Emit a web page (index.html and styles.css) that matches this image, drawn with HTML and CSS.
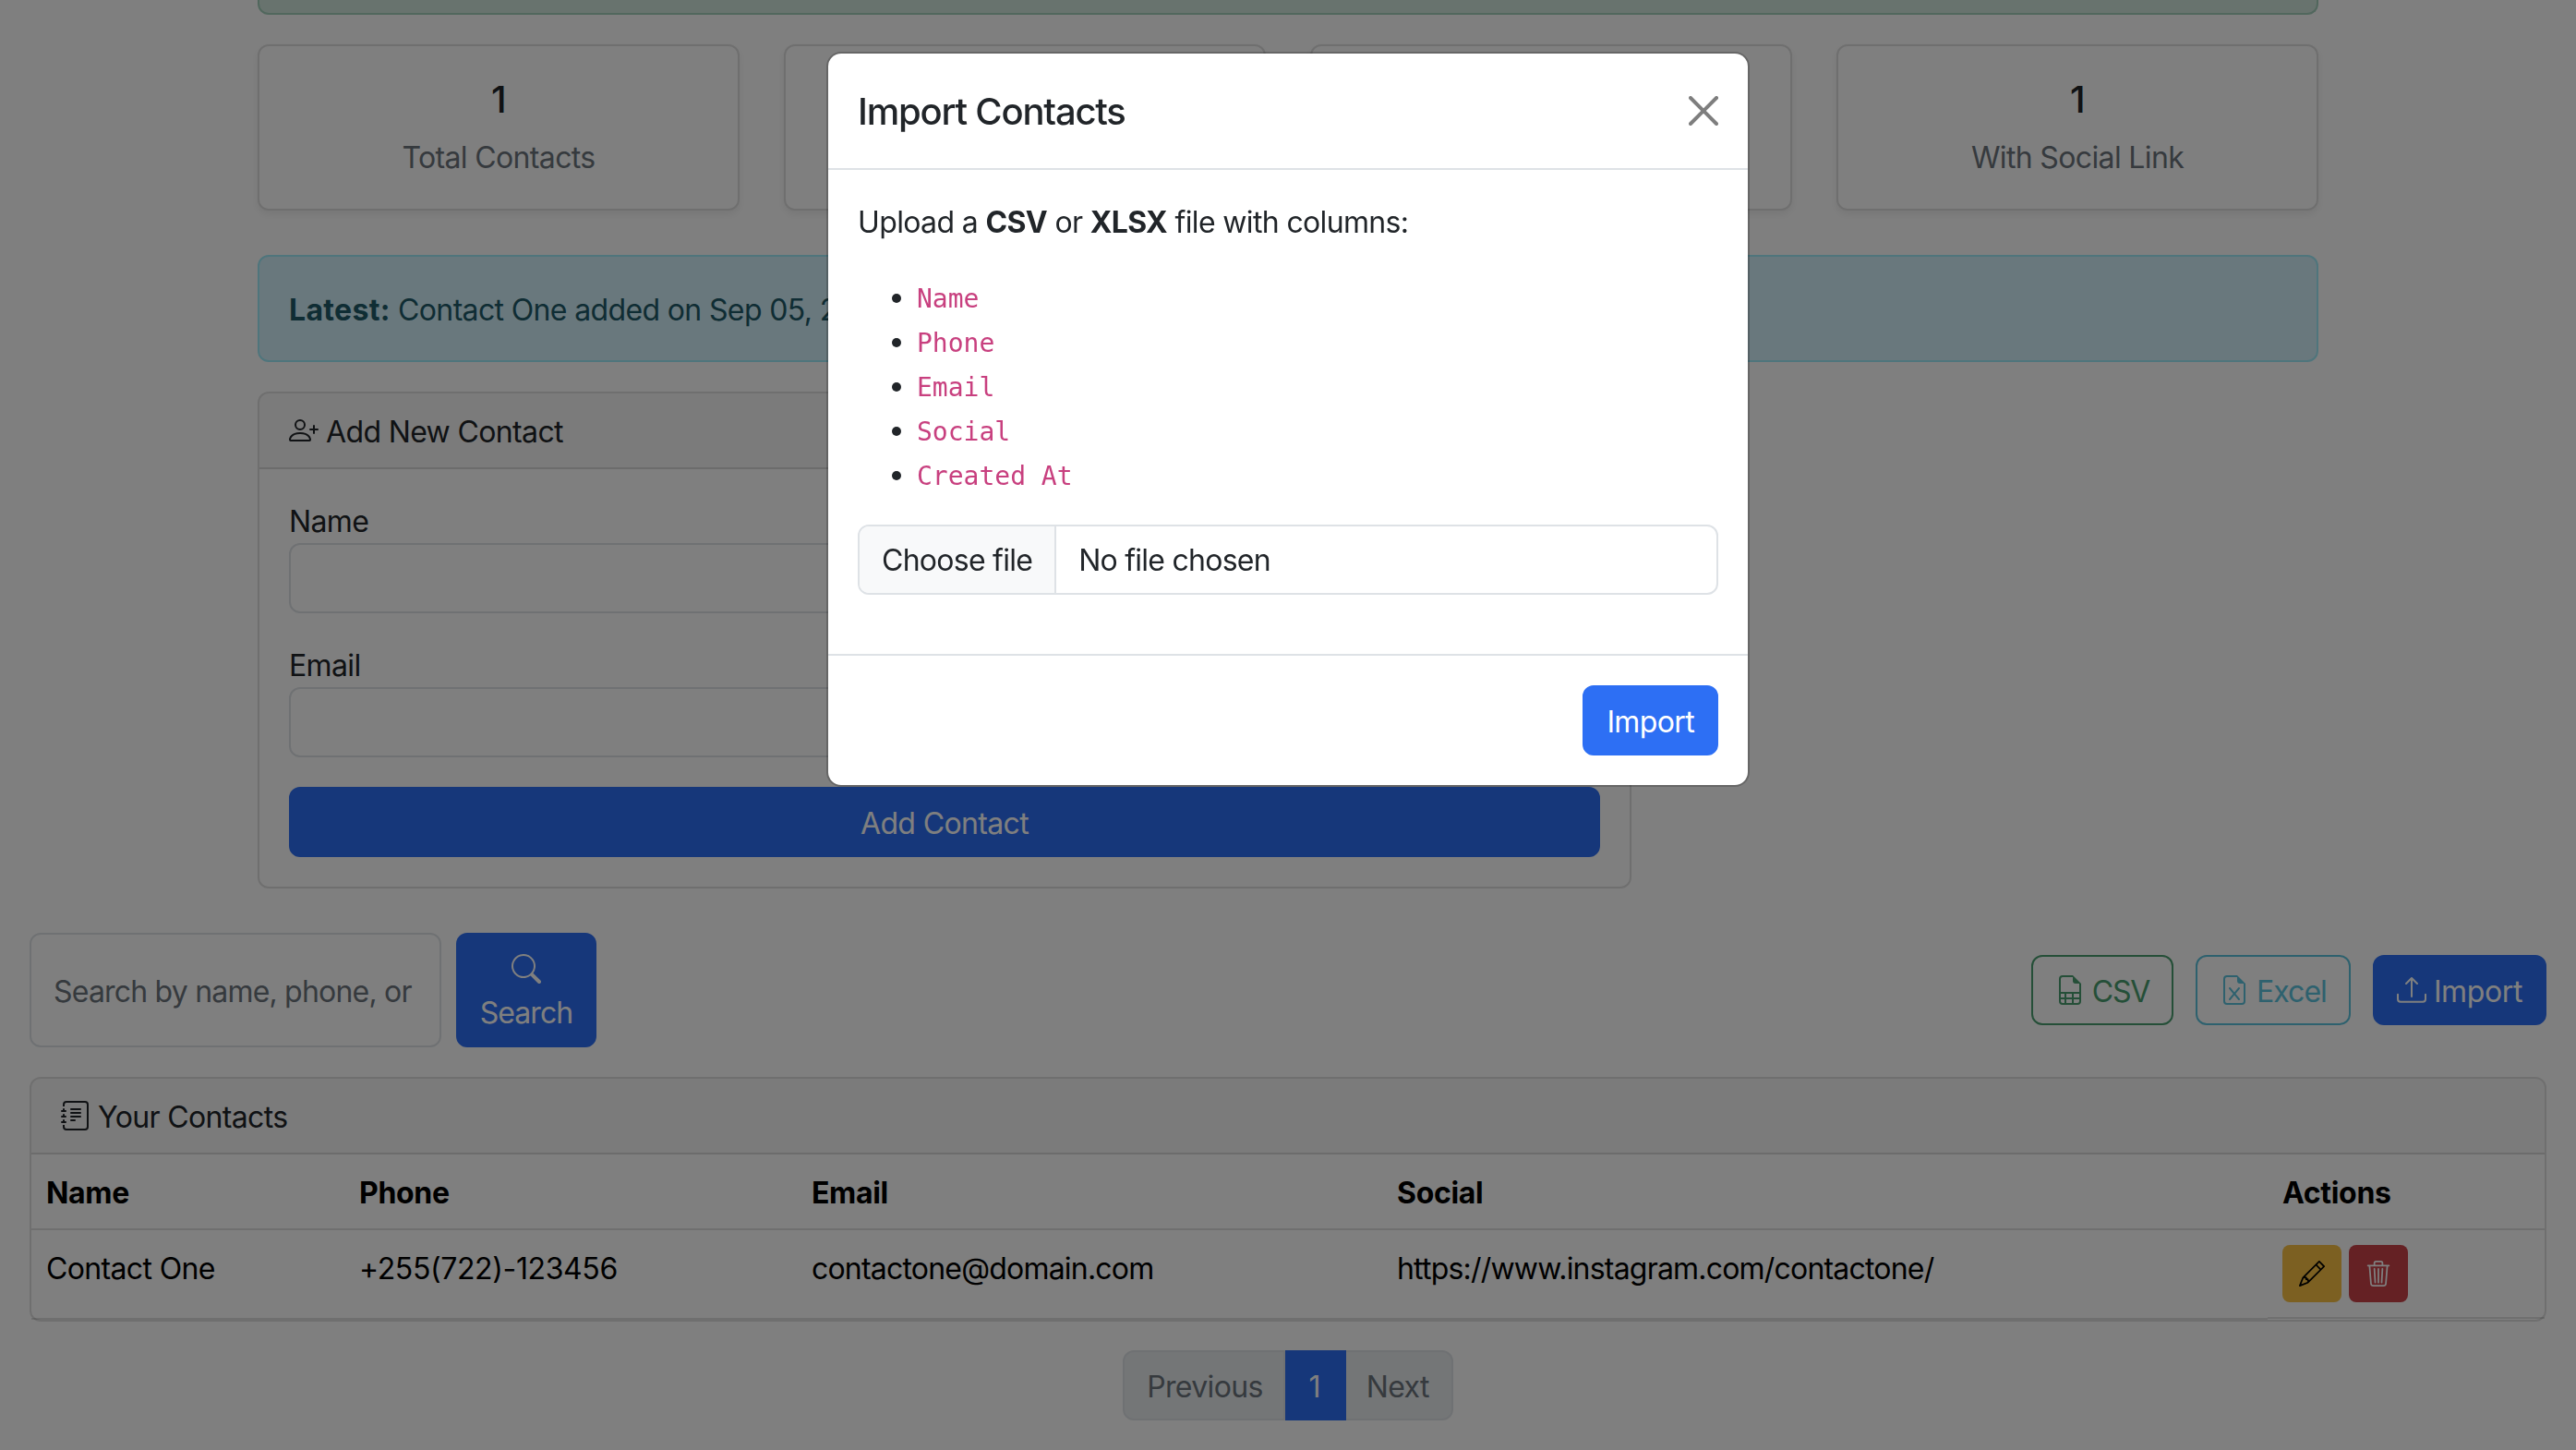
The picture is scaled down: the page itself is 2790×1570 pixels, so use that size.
FILE: index.html
```html
<!DOCTYPE html>
<html lang="en">
<head>
    <meta charset="UTF-8">
    <meta name="viewport" content="width=device-width, initial-scale=1.0">
    <title>Contacts</title>
    <link rel="stylesheet" href="styles.css">
</head>
<body>
    <main class="page">
        <div class="narrow">
            <div class="alert-success"></div>

            <div class="stats">
                <div class="stat-card"><h4>1</h4><p>Total Contacts</p></div>
                <div class="stat-card"><h4>1</h4><p>With Phone</p></div>
                <div class="stat-card"><h4>1</h4><p>With Email</p></div>
                <div class="stat-card"><h4>1</h4><p>With Social Link</p></div>
            </div>

            <div class="alert-info"><strong>Latest:</strong> Contact One added on Sep 05, 2025</div>

            <section class="card add-card">
                <div class="card-header">
                    <svg class="icon" viewBox="0 0 16 16" fill="currentColor"><path d="M6 8a3 3 0 1 0 0-6 3 3 0 0 0 0 6m2-3a2 2 0 1 1-4 0 2 2 0 0 1 4 0m4 8c0 1-1 1-1 1H1s-1 0-1-1 1-4 6-4 6 3 6 4m-1-.004c-.001-.246-.154-.986-.832-1.664C9.516 10.68 8.289 10 6 10s-3.516.68-4.168 1.332c-.678.678-.83 1.418-.832 1.664z"/><path fill-rule="evenodd" d="M13.5 5a.5.5 0 0 1 .5.5V7h1.5a.5.5 0 0 1 0 1H14v1.5a.5.5 0 0 1-1 0V8h-1.5a.5.5 0 0 1 0-1H13V5.5a.5.5 0 0 1 .5-.5"/></svg>
                    <span class="header-text">Add New Contact</span>
                </div>
                <form class="card-body">
                    <label class="field-label">Name</label>
                    <input class="form-control field" type="text">
                    <label class="field-label">Email</label>
                    <input class="form-control field" type="text">
                    <button class="btn btn-primary btn-block" type="button">Add Contact</button>
                </form>
            </section>
        </div>

        <div class="toolbar">
            <form class="search">
                <input class="form-control search-input" type="text" placeholder="Search by name, phone, or email">
                <button class="btn btn-primary search-btn" type="button">
                    <svg class="icon" viewBox="0 0 16 16" fill="currentColor"><path d="M11.742 10.344a6.5 6.5 0 1 0-1.397 1.398h-.001q.044.06.098.115l3.85 3.85a1 1 0 0 0 1.415-1.414l-3.85-3.85a1 1 0 0 0-.115-.1zM12 6.5a5.5 5.5 0 1 1-11 0 5.5 5.5 0 0 1 11 0"/></svg>
                    <span>Search</span>
                </button>
            </form>
            <div class="exports">
                <a class="btn btn-outline-success">
                    <svg class="icon" viewBox="0 0 16 16" fill="currentColor"><path d="M14 14V4.5L9.5 0H4a2 2 0 0 0-2 2v12a2 2 0 0 0 2 2h8a2 2 0 0 0 2-2M9.5 3A1.5 1.5 0 0 0 11 4.5h2V9H3V2a1 1 0 0 1 1-1h5.5zM3 12v-2h2v2zm0 1h2v2H4a1 1 0 0 1-1-1zm3 2v-2h3v2zm4 0v-2h3v1a1 1 0 0 1-1 1zm3-3h-3v-2h3zm-7 0v-2h3v2z"/></svg>
                    CSV
                </a>
                <a class="btn btn-outline-info">
                    <svg class="icon" viewBox="0 0 16 16" fill="currentColor"><path d="M5.884 6.68a.5.5 0 1 0-.768.64L7.349 10l-2.233 2.68a.5.5 0 0 0 .768.64L8 10.781l2.116 2.54a.5.5 0 0 0 .768-.641L8.651 10l2.233-2.68a.5.5 0 0 0-.768-.64L8 9.219l-2.116-2.54z"/><path d="M14 14V4.5L9.5 0H4a2 2 0 0 0-2 2v12a2 2 0 0 0 2 2h8a2 2 0 0 0 2-2M9.5 3A1.5 1.5 0 0 0 11 4.5h2V14a1 1 0 0 1-1 1H4a1 1 0 0 1-1-1V2a1 1 0 0 1 1-1h5.5z"/></svg>
                    Excel
                </a>
                <a class="btn btn-primary btn-import">
                    <svg class="icon" viewBox="0 0 16 16" fill="currentColor"><path d="M.5 9.9a.5.5 0 0 1 .5.5v2.5a1 1 0 0 0 1 1h12a1 1 0 0 0 1-1v-2.5a.5.5 0 0 1 1 0v2.5a2 2 0 0 1-2 2H2a2 2 0 0 1-2-2v-2.5a.5.5 0 0 1 .5-.5"/><path d="M7.646 1.146a.5.5 0 0 1 .708 0l3 3a.5.5 0 0 1-.708.708L8.5 2.707V11.5a.5.5 0 0 1-1 0V2.707L5.354 4.854a.5.5 0 1 1-.708-.708z"/></svg>
                    Import
                </a>
            </div>
        </div>

        <section class="card contacts-card">
            <div class="card-header">
                <svg class="icon" viewBox="0 0 16 16" fill="currentColor"><path d="M5 10.5a.5.5 0 0 1 .5-.5h2a.5.5 0 0 1 0 1h-2a.5.5 0 0 1-.5-.5m0-2a.5.5 0 0 1 .5-.5h5a.5.5 0 0 1 0 1h-5a.5.5 0 0 1-.5-.5m0-2a.5.5 0 0 1 .5-.5h5a.5.5 0 0 1 0 1h-5a.5.5 0 0 1-.5-.5m0-2a.5.5 0 0 1 .5-.5h5a.5.5 0 0 1 0 1h-5a.5.5 0 0 1-.5-.5"/><path d="M3 0h10a2 2 0 0 1 2 2v12a2 2 0 0 1-2 2H3a2 2 0 0 1-2-2v-1h1v1a1 1 0 0 0 1 1h10a1 1 0 0 0 1-1V2a1 1 0 0 0-1-1H3a1 1 0 0 0-1 1v1H1V2a2 2 0 0 1 2-2"/><path d="M1 5v-.5a.5.5 0 0 1 1 0V5h.5a.5.5 0 0 1 0 1h-2a.5.5 0 0 1 0-1zm0 3v-.5a.5.5 0 0 1 1 0V8h.5a.5.5 0 0 1 0 1h-2a.5.5 0 0 1 0-1zm0 3v-.5a.5.5 0 0 1 1 0v.5h.5a.5.5 0 0 1 0 1h-2a.5.5 0 0 1 0-1z"/></svg>
                <span class="header-text">Your Contacts</span>
            </div>
            <table class="contacts">
                <colgroup>
                    <col class="col-name"><col class="col-phone"><col class="col-email"><col class="col-social"><col>
                </colgroup>
                <thead>
                    <tr><th>Name</th><th>Phone</th><th>Email</th><th>Social</th><th>Actions</th></tr>
                </thead>
                <tbody>
                    <tr>
                        <td>Contact One</td>
                        <td class="cell-phone">+255(722)-123456</td>
                        <td class="cell-tight">contactone@domain.com</td>
                        <td class="cell-tight">https://www.instagram.com/contactone/</td>
                        <td class="actions">
                            <a class="btn-sm btn-warning">
                                <svg class="icon" viewBox="0 0 16 16" fill="currentColor"><path d="M12.146.146a.5.5 0 0 1 .708 0l3 3a.5.5 0 0 1 0 .708l-10 10a.5.5 0 0 1-.168.11l-5 2a.5.5 0 0 1-.65-.65l2-5a.5.5 0 0 1 .11-.168zM11.207 2.5 13.5 4.793 14.793 3.5 12.5 1.207zm1.586 3L10.5 3.207 4 9.707V10h.5a.5.5 0 0 1 .5.5v.5h.5a.5.5 0 0 1 .5.5v.5h.293zm-9.761 5.175-.106.106-1.528 3.821 3.821-1.528.106-.106A.5.5 0 0 1 5 12.5V12h-.5a.5.5 0 0 1-.5-.5V11h-.5a.5.5 0 0 1-.468-.325"/></svg>
                            </a>
                            <a class="btn-sm btn-danger">
                                <svg class="icon" viewBox="0 0 16 16" fill="currentColor"><path d="M6.5 1h3a.5.5 0 0 1 .5.5v1H6v-1a.5.5 0 0 1 .5-.5M11 2.5v-1A1.5 1.5 0 0 0 9.5 0h-3A1.5 1.5 0 0 0 5 1.5v1H1.5a.5.5 0 0 0 0 1h.538l.853 10.66A2 2 0 0 0 4.885 16h6.23a2 2 0 0 0 1.994-1.84l.853-10.66h.538a.5.5 0 0 0 0-1zm1.958 1-.846 10.58a1 1 0 0 1-.997.92h-6.23a1 1 0 0 1-.997-.92L3.042 3.5zm-7.487 1a.5.5 0 0 1 .528.47l.5 8.5a.5.5 0 0 1-.998.06L5 5.03a.5.5 0 0 1 .47-.53Zm5.058 0a.5.5 0 0 1 .47.53l-.5 8.5a.5.5 0 1 1-.998-.06l.5-8.5a.5.5 0 0 1 .528-.47M8 4.5a.5.5 0 0 1 .5.5v8.5a.5.5 0 0 1-1 0V5a.5.5 0 0 1 .5-.5"/></svg>
                            </a>
                        </td>
                    </tr>
                </tbody>
            </table>
        </section>

        <nav class="pagination">
            <a class="page-link disabled">Previous</a>
            <a class="page-link active">1</a>
            <a class="page-link disabled">Next</a>
        </nav>
    </main>

    <div class="modal-backdrop"></div>

    <div class="modal">
        <div class="modal-content">
            <div class="modal-header">
                <h5>Import Contacts</h5>
                <svg class="btn-close" viewBox="0 0 16 16" fill="currentColor"><path d="M.293.293a1 1 0 0 1 1.414 0L8 6.586 14.293.293a1 1 0 1 1 1.414 1.414L9.414 8l6.293 6.293a1 1 0 0 1-1.414 1.414L8 9.414l-6.293 6.293a1 1 0 0 1-1.414-1.414L6.586 8 .293 1.707a1 1 0 0 1 0-1.414"/></svg>
            </div>
            <div class="modal-body">
                <p>Upload a <strong>CSV</strong> or <strong>XLSX</strong> file with columns:</p>
                <ul>
                    <li><code>Name</code></li>
                    <li><code>Phone</code></li>
                    <li><code>Email</code></li>
                    <li><code>Social</code></li>
                    <li><code>Created At</code></li>
                </ul>
                <div class="file-input">
                    <span class="file-button">Choose file</span>
                    <span class="file-name">No file chosen</span>
                </div>
            </div>
            <div class="modal-footer">
                <button class="btn btn-primary" type="button">Import</button>
            </div>
        </div>
    </div>
</body>
</html>
```

FILE: styles.css
```css
* {
    box-sizing: border-box;
}
html, body {
    height: 100%;
    overflow: hidden;
}
body {
    margin: 0;
    background: #fff;
    color: #212529;
    font-family: Inter, "Noto Sans", sans-serif;
    font-size: 32px;
    line-height: 48px;
    letter-spacing: -0.02em;
}
.page {
    padding: 0 32px;
}
.narrow {
    width: 2232px;
    margin: 0 auto;
}
.alert-success {
    height: 16px;
    background: #d1e7dd;
    border: 2px solid #a3cfbb;
    border-top: 0;
    border-radius: 0 0 12px 12px;
}

/* stat cards */
.stats {
    display: grid;
    grid-template-columns: repeat(4, 1fr);
    gap: 48px;
    margin-top: 32px;
}
.stat-card {
    padding: 34px 32px 30px;
    background: #fff;
    border: 2px solid rgba(0, 0, 0, .125);
    border-radius: 12px;
    box-shadow: 0 4px 8px rgba(0, 0, 0, .075);
    text-align: center;
}
.stat-card h4 {
    margin: 0 0 15px;
    font-size: 40px;
    font-weight: 500;
    line-height: 48px;
}
.stat-card p {
    margin: 0 0 1px;
    color: #6c757d;
}
.alert-info {
    margin-top: 48px;
    padding: 34px 32px 30px;
    background: #d3f0fa;
    border: 2px solid #9eeaf9;
    border-radius: 12px;
    color: #1f5a68;
}
.alert-info strong {
    letter-spacing: .01em;
}

/* cards */
.card {
    background: #fff;
    border: 2px solid rgba(0, 0, 0, .125);
    border-radius: 12px;
}
.card-header {
    display: flex;
    align-items: center;
    gap: 8px;
    padding: 16px 32px;
    background: rgba(0, 0, 0, .03);
    border-bottom: 2px solid rgba(0, 0, 0, .125);
    border-radius: 10px 10px 0 0;
}
.header-text {
    height: 48px;
    padding-top: 2px;
}
.card-body {
    display: flex;
    flex-direction: column;
    padding: 32px;
}
.add-card {
    width: 1488px;
    margin-top: 32px;
}
.field-label {
    display: block;
    height: 48px;
    padding-top: 1px;
}
.form-control {
    padding: 12px 24px;
    background: #fff;
    border: 2px solid #dee2e6;
    border-radius: 12px;
    color: #212529;
    font: inherit;
    letter-spacing: inherit;
}
.form-control::placeholder {
    color: #6c757d;
    opacity: 1;
}
.field {
    height: 76px;
    margin-bottom: 32px;
}
.icon {
    flex: none;
    width: 32px;
    height: 32px;
}

/* buttons */
.btn {
    display: inline-flex;
    align-items: center;
    justify-content: center;
    gap: 8px;
    padding: 14px 24px 10px;
    border: 2px solid transparent;
    border-radius: 12px;
    font: inherit;
    letter-spacing: inherit;
}
.btn .icon {
    margin-top: -4px;
}
.btn-primary {
    background: #2d6ff4;
    border-color: #2d6ff4;
    color: #fff;
}
.btn-block {
    width: 100%;
}
.btn-import {
    letter-spacing: -0.012em;
}
.btn-outline-success {
    border-color: #4a9e70;
    color: #4a9e70;
    letter-spacing: -0.04em;
}
.btn-outline-info {
    border-color: #5cc3dd;
    color: #5cc3dd;
    letter-spacing: -0.03em;
}
.btn-sm {
    display: inline-flex;
    align-items: center;
    justify-content: center;
    width: 64px;
    height: 62px;
    border-radius: 8px;
}
.btn-sm .icon {
    width: 28px;
    height: 28px;
}
.btn-warning {
    background: #f8c145;
    color: #000;
}
.btn-danger {
    background: #ca4249;
    color: #fff;
}

/* search and export row */
.toolbar {
    display: flex;
    align-items: center;
    justify-content: space-between;
    margin-top: 48px;
}
.search {
    display: flex;
    gap: 16px;
}
.search-input {
    width: 446px;
    padding-top: 14px;
    padding-bottom: 10px;
    letter-spacing: -0.025em;
}
.search-btn {
    flex-direction: column;
    gap: 0;
    width: 152px;
    padding: 13px 0 11px;
    letter-spacing: -0.03em;
}
.search-btn .icon {
    margin: 8px 0 8px 0;
}
.exports {
    display: flex;
    gap: 24px;
}

/* contacts table */
.contacts-card {
    margin-top: 32px;
}
.contacts {
    width: 100%;
    border-collapse: collapse;
    table-layout: fixed;
    color: #000;
}
.col-name { width: 339px; }
.col-phone { width: 490px; }
.col-email { width: 634px; }
.col-social { width: 959px; }
.contacts th, .contacts td {
    padding: 18px 16px 14px;
    text-align: left;
    vertical-align: top;
}
.contacts th {
    border-bottom: 2px solid rgba(0, 0, 0, .125);
    font-weight: 700;
    letter-spacing: -0.01em;
}
.contacts tbody tr td {
    border-bottom: 2px solid rgba(0, 0, 0, .125);
}
.contacts td.actions {
    display: flex;
    gap: 8px;
    padding: 16px;
}
.cell-phone {
    letter-spacing: -0.012em;
}
.cell-tight {
    letter-spacing: -0.025em;
}

/* pagination */
.pagination {
    display: flex;
    justify-content: center;
    margin-top: 31px;
}
.page-link {
    padding: 14px 24px 10px;
    border: 2px solid #dee2e6;
    border-left: 0;
}
.page-link.disabled {
    background: #e9ecef;
    color: #6c757d;
}
.page-link.disabled:first-child {
    padding-right: 22px;
    border-left: 2px solid #dee2e6;
    border-radius: 12px 0 0 12px;
}
.page-link.disabled:last-child {
    padding-left: 22px;
    border-radius: 0 12px 12px 0;
}
.page-link.active {
    width: 66px;
    padding-left: 0;
    padding-right: 0;
    background: #2d6ff4;
    border-color: #2d6ff4;
    color: #fff;
    text-align: center;
}

/* modal */
.modal-backdrop {
    position: fixed;
    inset: 0;
    background: #000;
    opacity: .5;
}
.modal {
    position: fixed;
    inset: 0;
    padding-top: 56px;
}
.modal-content {
    width: 1000px;
    margin: 0 auto;
    background: #fff;
    border: 2px solid rgba(0, 0, 0, .2);
    border-radius: 16px;
    background-clip: padding-box;
}
.modal-header {
    display: flex;
    align-items: center;
    justify-content: space-between;
    padding: 32px;
    border-bottom: 2px solid #dee2e6;
}
.modal-header h5 {
    height: 60px;
    margin: 0;
    padding-top: 1px;
    font-size: 40px;
    font-weight: 500;
    line-height: 60px;
    letter-spacing: -0.03em;
}
.btn-close {
    width: 32px;
    height: 32px;
    opacity: .5;
    color: #000;
}
.modal-body {
    padding: 32px;
}
.modal-body p {
    height: 48px;
    margin: 0 0 32px;
    padding-top: 1px;
}
.modal-body strong {
    font-weight: 700;
}
.modal-body ul {
    margin: 0 0 32px;
    padding-left: 64px;
}
.modal-body li {
    height: 48px;
    padding-top: 2px;
}
code {
    color: #c8407f;
    font-family: "DejaVu Sans Mono", monospace;
    font-size: 28px;
    line-height: 1;
    letter-spacing: 0;
}
.file-input {
    display: flex;
    height: 76px;
    margin-bottom: 32px;
    border: 2px solid #dee2e6;
    border-radius: 12px;
    overflow: hidden;
    letter-spacing: -0.023em;
}
.file-button {
    padding: 13px 24px 11px;
    background: #f8f9fa;
    border-right: 2px solid #dee2e6;
}
.file-name {
    padding: 13px 24px 11px;
}
.modal-footer {
    display: flex;
    justify-content: flex-end;
    padding: 32px;
    border-top: 2px solid #dee2e6;
}
```
